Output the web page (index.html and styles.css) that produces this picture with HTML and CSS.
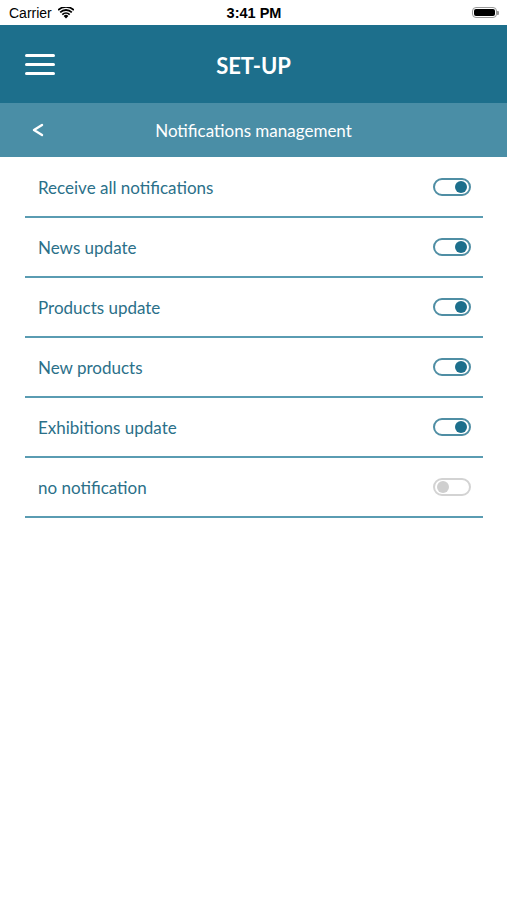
FILE: index.html
```html
<!DOCTYPE html>
<html lang="en">
<head>
    <meta charset="UTF-8">
    <meta name="viewport" content="width=device-width, initial-scale=1.0">
    <title>Set-up</title>
    <link rel="stylesheet" href="styles.css">
</head>
<body>

<!-- Status bar -->
<div class="status-bar">
    <div class="status-left">
        <span>Carrier</span>
        <svg class="wifi" width="16" height="12" viewBox="0 0 16 12">
            <path d="M8 11.5 L5.6 8.9 A3.4 3.4 0 0 1 10.4 8.9 Z" fill="#000"/>
            <path d="M3.7 6.9 A6.2 6.2 0 0 1 12.3 6.9 L11.1 8.2 A4.5 4.5 0 0 0 4.9 8.2 Z" fill="#000"/>
            <path d="M1.6 4.7 A9.2 9.2 0 0 1 14.4 4.7 L13.2 6 A7.5 7.5 0 0 0 2.8 6 Z" fill="#000"/>
            <path d="M-0.4 2.5 A12 12 0 0 1 16.4 2.5 L15.3 3.8 A10.4 10.4 0 0 0 0.7 3.8 Z" fill="#000"/>
        </svg>
    </div>
    <div class="status-time">3:41 PM</div>
    <div class="status-right">
        <div class="battery"><div class="battery-level"></div></div>
        <div class="battery-cap"></div>
    </div>
</div>

<!-- Main header -->
<div class="header">
    <div class="burger">
        <span></span><span></span><span></span>
    </div>
    <h1>SET-UP</h1>
</div>

<!-- Sub header -->
<div class="subheader">
    <svg class="back" width="14" height="14" viewBox="0 0 14 14">
        <path d="M11 2 L3 7 L11 12" fill="none" stroke="#fff" stroke-width="2.4" stroke-linecap="round" stroke-linejoin="round"/>
    </svg>
    <h2>Notifications management</h2>
</div>

<!-- Settings list -->
<div class="list">
    <div class="row">
        <span>Receive all notifications</span>
        <div class="toggle on"><div class="knob"></div></div>
    </div>
    <div class="row">
        <span>News update</span>
        <div class="toggle on"><div class="knob"></div></div>
    </div>
    <div class="row">
        <span>Products update</span>
        <div class="toggle on"><div class="knob"></div></div>
    </div>
    <div class="row">
        <span>New products</span>
        <div class="toggle on"><div class="knob"></div></div>
    </div>
    <div class="row">
        <span>Exhibitions update</span>
        <div class="toggle on"><div class="knob"></div></div>
    </div>
    <div class="row">
        <span>no notification</span>
        <div class="toggle"><div class="knob"></div></div>
    </div>
</div>

</body>
</html>
```

FILE: styles.css
```css
body {
    font-family: Lato, "Open Sans", sans-serif;
    margin: 0;
    padding: 0;
    background-color: #fff;
}

/* Status bar */
.status-bar {
    height: 25px;
    display: flex;
    align-items: center;
    justify-content: space-between;
    padding: 0 8px 0 9px;
    font-family: "Liberation Sans", Arial, sans-serif;
    font-size: 14px;
    color: #000;
}

.status-left {
    display: flex;
    align-items: center;
    gap: 6px;
    width: 120px;
}

.status-time {
    font-weight: bold;
    font-size: 14.5px;
}

.status-right {
    width: 120px;
    display: flex;
    justify-content: flex-end;
    align-items: center;
}

.battery {
    width: 25px;
    height: 11px;
    border: 1px solid #999;
    border-radius: 4px;
    padding: 1px;
    box-sizing: border-box;
    display: flex;
}

.battery-level {
    flex: 1;
    background-color: #000;
    border-radius: 2px;
}

.battery-cap {
    width: 2px;
    height: 4px;
    background-color: #999;
    border-radius: 0 1px 1px 0;
}

/* Header */
.header {
    height: 78px;
    background-color: #1d6f8c;
    display: flex;
    align-items: center;
}

.burger {
    margin-left: 25px;
    width: 30px;
    display: flex;
    flex-direction: column;
    gap: 6px;
}

.burger span {
    display: block;
    height: 3px;
    background-color: #fff;
    border-radius: 2px;
}

.header h1 {
    flex: 1;
    margin: 2px 0 0 -55px;
    text-align: center;
    color: #fff;
    font-size: 22px;
    font-weight: bold;
}

.subheader {
    height: 54px;
    background-color: #4a8ea6;
    display: flex;
    align-items: center;
}

.back {
    margin-left: 31px;
}

.subheader h2 {
    flex: 1;
    margin: 0 0 0 -45px;
    text-align: center;
    color: #fff;
    font-size: 17px;
    font-weight: normal;
}

/* List */
.list {
    padding: 1px 24px 0 25px;
}

.row {
    height: 58px;
    border-bottom: 2px solid #5a9cb2;
    display: flex;
    align-items: center;
    justify-content: space-between;
    padding: 0 12px 0 13px;
    color: #2b7089;
    font-size: 17px;
}

.row span {
    margin-top: 1px;
}

.toggle {
    width: 38px;
    height: 18px;
    box-sizing: border-box;
    border: 2px solid #4f8ea4;
    border-radius: 9px;
    display: flex;
    align-items: center;
    justify-content: flex-start;
    padding: 0 2px;
    margin-top: -1px;
}

.toggle.on {
    justify-content: flex-end;
}

.knob {
    width: 12px;
    height: 12px;
    border-radius: 50%;
    background-color: #cfcfcf;
}

.toggle.on .knob {
    background-color: #1d6f8c;
}

.toggle:not(.on) {
    border-color: #d3d3d3;
}
```
